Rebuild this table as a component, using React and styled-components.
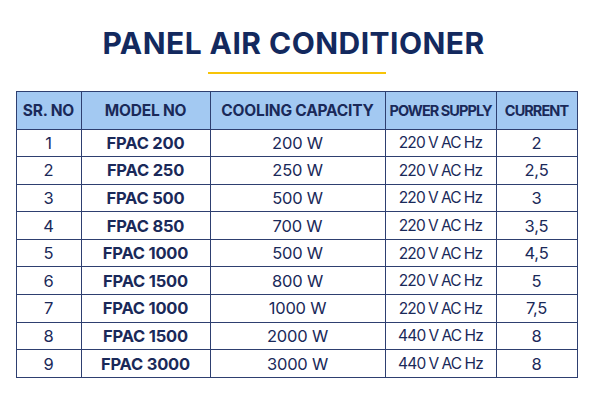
import React from "react";
import styled, { createGlobalStyle } from "styled-components";

const Global = createGlobalStyle`
  html, body { margin: 0; padding: 0; background: #ffffff; }
  body { font-family: Inter, Roboto, "Liberation Sans", sans-serif; }
`;

const Page = styled.div`
  width: 600px;
  height: 400px;
  box-sizing: border-box;
  padding-left: 16px;
  display: flex;
  flex-direction: column;
`;

const Wrapper = styled.div`
  width: 561px;
  display: flex;
  flex-direction: column;
  align-items: center;
`;

const Heading = styled.h1`
  margin: 28px 6px 0 0;
  font-size: 30px;
  line-height: 30px;
  font-weight: 700;
  color: #13295e;
  letter-spacing: 0.45px;
`;

const Underline = styled.div`
  width: 178px;
  height: 2px;
  margin-top: 14px;
  background: #f7c408;
`;

const Table = styled.table`
  margin-top: 16.5px;
  width: 561px;
  border-collapse: collapse;
  table-layout: fixed;
  color: #1b2a5c;
  border: 1.5px solid #2e3f70;
`;

const Th = styled.th`
  height: 37px;
  padding: 0;
  background: #a3c9f2;
  border: 1.5px solid #2e3f70;
  font-size: ${(p) => (p.$tight ? "14.5px" : "15.5px")};
  font-weight: 700;
  letter-spacing: ${(p) => (p.$tight ? "-0.95px" : "-0.2px")};
  text-align: center;
  color: #1a2959;
  white-space: nowrap;
`;

const Td = styled.td`
  height: 26.6px;
  padding: 0;
  border: 1.5px solid #2e3f70;
  font-size: ${(p) => (p.$tight ? "15.5px" : "16.5px")};
  font-weight: ${(p) => (p.$bold ? 700 : 400)};
  letter-spacing: ${(p) => (p.$tight ? "-0.8px" : "-0.2px")};
  word-spacing: ${(p) => (p.$tight ? "-0.5px" : "0")};
  text-align: center;
  color: #1a2959;
  white-space: nowrap;
`;

const cols = [65, 129, 175, 111, 81];

const rows = [
  ["1", "FPAC 200", "200 W", "220 V AC Hz", "2"],
  ["2", "FPAC 250", "250 W", "220 V AC Hz", "2,5"],
  ["3", "FPAC 500", "500 W", "220 V AC Hz", "3"],
  ["4", "FPAC 850", "700 W", "220 V AC Hz", "3,5"],
  ["5", "FPAC 1000", "500 W", "220 V AC Hz", "4,5"],
  ["6", "FPAC 1500", "800 W", "220 V AC Hz", "5"],
  ["7", "FPAC 1000", "1000 W", "220 V AC Hz", "7,5"],
  ["8", "FPAC 1500", "2000 W", "440 V AC Hz", "8"],
  ["9", "FPAC 3000", "3000 W", "440 V AC Hz", "8"],
];

const heads = ["SR. NO", "MODEL NO", "COOLING CAPACITY", "POWER SUPPLY", "CURRENT"];

export default function App() {
  return (
    <>
      <Global />
      <Page>
        <Wrapper>
          <Heading>PANEL AIR CONDITIONER</Heading>
          <Underline />
          <Table>
            <colgroup>
              {cols.map((w, i) => (
                <col key={i} style={{ width: w }} />
              ))}
            </colgroup>
            <thead>
              <tr>
                {heads.map((h, i) => (
                  <Th key={h} $tight={i >= 3}>
                    {h}
                  </Th>
                ))}
              </tr>
            </thead>
            <tbody>
              {rows.map((r, i) => (
                <tr key={i}>
                  {r.map((c, j) => (
                    <Td key={j} $bold={j === 1} $tight={j === 3}>
                      {c}
                    </Td>
                  ))}
                </tr>
              ))}
            </tbody>
          </Table>
        </Wrapper>
      </Page>
    </>
  );
}
